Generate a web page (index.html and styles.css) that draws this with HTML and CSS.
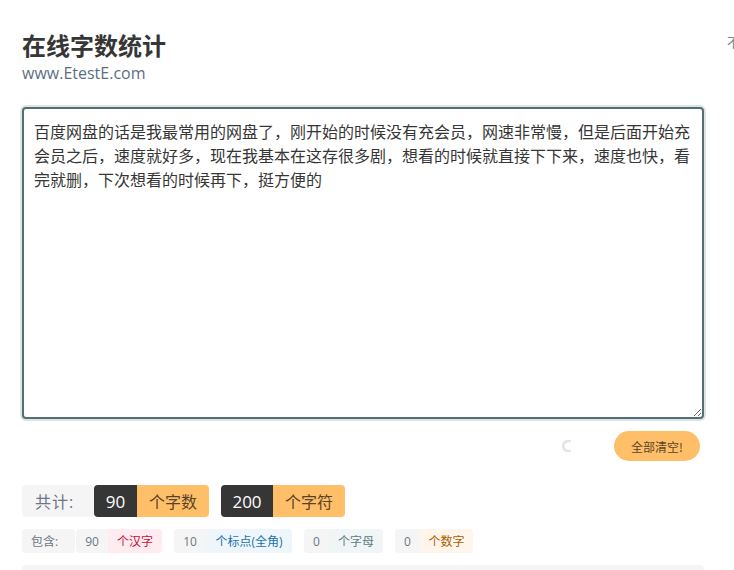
FILE: index.html
```html
<!DOCTYPE html>
<html lang="zh">
<head>
    <meta charset="UTF-8">
    <meta name="viewport" content="width=device-width, initial-scale=1.0">
    <title>在线字数统计</title>
    <link rel="stylesheet" href="styles.css">
</head>
<body>
    <div class="side-note">不</div>
    <div class="container">
        <h1 class="title">在线字数统计</h1>
        <p class="subtitle">www.EtestE.com</p>

        <textarea class="text-input" spellcheck="false">百度网盘的话是我最常用的网盘了，刚开始的时候没有充会员，网速非常慢，但是后面开始充会员之后，速度就好多，现在我基本在这存很多剧，想看的时候就直接下下来，速度也快，看完就删，下次想看的时候再下，挺方便的</textarea>

        <div class="actions">
            <svg class="loader" width="10" height="12" viewBox="0 0 10 12">
                <path d="M8.5 1.6 A5 5 0 1 0 8.5 10.4" fill="none" stroke="#e2e4e6" stroke-width="2.6"/>
            </svg>
            <button type="button" class="clear-btn">全部清空!</button>
        </div>

        <div class="total-row">
            <span class="tag tag-label">共计:</span>
            <div class="tag-pair">
                <span class="tag tag-dark">90</span><span class="tag tag-warm">个字数</span>
            </div>
            <div class="tag-pair pair-chars">
                <span class="tag tag-dark">200</span><span class="tag tag-warm">个字符</span>
            </div>
        </div>

        <div class="detail-row">
            <span class="mini mini-label">包含:</span>
            <div class="mini-pair">
                <span class="mini mini-num">90</span><span class="mini mini-han">个汉字</span>
            </div>
            <div class="mini-pair">
                <span class="mini mini-num">10</span><span class="mini mini-punct">个标点(全角)</span>
            </div>
            <div class="mini-pair">
                <span class="mini mini-num mini-single">0</span><span class="mini mini-letter">个字母</span>
            </div>
            <div class="mini-pair">
                <span class="mini mini-num mini-single">0</span><span class="mini mini-digit">个数字</span>
            </div>
        </div>

        <div class="notice"></div>
    </div>
</body>
</html>
```

FILE: styles.css
```css
html, body {
    height: 100%;
    overflow: hidden;
}
body {
    margin: 0;
    background-color: #fff;
    font-family: "Open Sans", "Noto Sans CJK SC", sans-serif;
    color: #4a4a4a;
    position: relative;
}
.side-note {
    position: absolute;
    top: 33px;
    left: 727px;
    font-size: 13px;
    line-height: 18px;
    color: #6f8290;
}
.container {
    width: 682px;
    height: 539px;
    margin-left: 22px;
    padding-top: 31px;
}
.title {
    margin: 0;
    font-size: 24px;
    line-height: 30px;
    font-weight: 700;
    color: #363636;
}
.subtitle {
    margin: 2px 0 24px;
    font-size: 16px;
    line-height: 20px;
    color: #5c6f82;
}
.text-input {
    display: block;
    box-sizing: border-box;
    width: 682px;
    height: 312px;
    padding: 10px 10px;
    border: 2px solid #546e74;
    border-radius: 4px;
    box-shadow: 0 0 0 2px #dde4e6;
    outline: none;
    font-family: "Noto Sans CJK SC", sans-serif;
    font-size: 16px;
    line-height: 24px;
    color: #363636;
    background-color: #fff;
    resize: vertical;
}
.actions {
    display: flex;
    justify-content: flex-end;
    align-items: center;
    gap: 42px;
    margin-top: 12px;
    padding-right: 4px;
}
.clear-btn {
    width: 86px;
    height: 30px;
    padding: 0;
    border: none;
    border-radius: 15px;
    background-color: #ffbf69;
    color: #5a4326;
    font-family: "Noto Sans CJK SC", sans-serif;
    font-size: 12px;
    cursor: pointer;
}
.total-row {
    display: flex;
    margin-top: 24px;
}
.tag {
    display: flex;
    align-items: center;
    justify-content: center;
    height: 32px;
    font-size: 16px;
}
.tag-pair {
    display: flex;
}
.pair-chars {
    margin-left: 12px;
}
.tag-label {
    box-sizing: border-box;
    width: 72px;
    padding-left: 13px;
    justify-content: flex-start;
    letter-spacing: 1px;
    background-color: #f5f5f5;
    border-radius: 4px;
    color: #6b7785;
}
.tag-dark {
    width: 43px;
    font-size: 17px;
    background-color: #363636;
    color: #fff;
    border-radius: 4px 0 0 4px;
}
.pair-chars .tag-dark {
    width: 52px;
}
.tag-warm {
    width: 72px;
    background-color: #ffbf69;
    color: #5a4326;
    border-radius: 0 4px 4px 0;
}
.detail-row {
    display: flex;
    margin-top: 12px;
}
.mini-pair {
    display: flex;
    margin-right: 12px;
}
.mini {
    display: flex;
    align-items: center;
    justify-content: center;
    height: 24px;
    font-size: 12px;
    color: #6b7785;
}
.mini-label {
    box-sizing: border-box;
    width: 53px;
    margin-right: 1px;
    padding-left: 9px;
    justify-content: flex-start;
    background-color: #f5f5f5;
    border-radius: 4px;
}
.mini-num {
    width: 32px;
    background-color: #f5f5f5;
    border-radius: 4px 0 0 4px;
}
.mini-single {
    width: 25px;
}
.mini-han, .mini-punct, .mini-letter, .mini-digit {
    border-radius: 0 4px 4px 0;
}
.mini-han {
    width: 54px;
    background-color: #feecf0;
    color: #cc0f35;
}
.mini-punct {
    width: 86px;
    background-color: #eef6fc;
    color: #1d72aa;
}
.mini-letter {
    width: 54px;
    background-color: #f0f5f6;
    color: #5f7a80;
}
.mini-digit {
    width: 53px;
    background-color: #fff5eb;
    color: #a65e00;
}
.notice {
    height: 5px;
    margin-top: 12px;
    background-color: #f5f5f5;
    border-radius: 4px 4px 0 0;
}
```
